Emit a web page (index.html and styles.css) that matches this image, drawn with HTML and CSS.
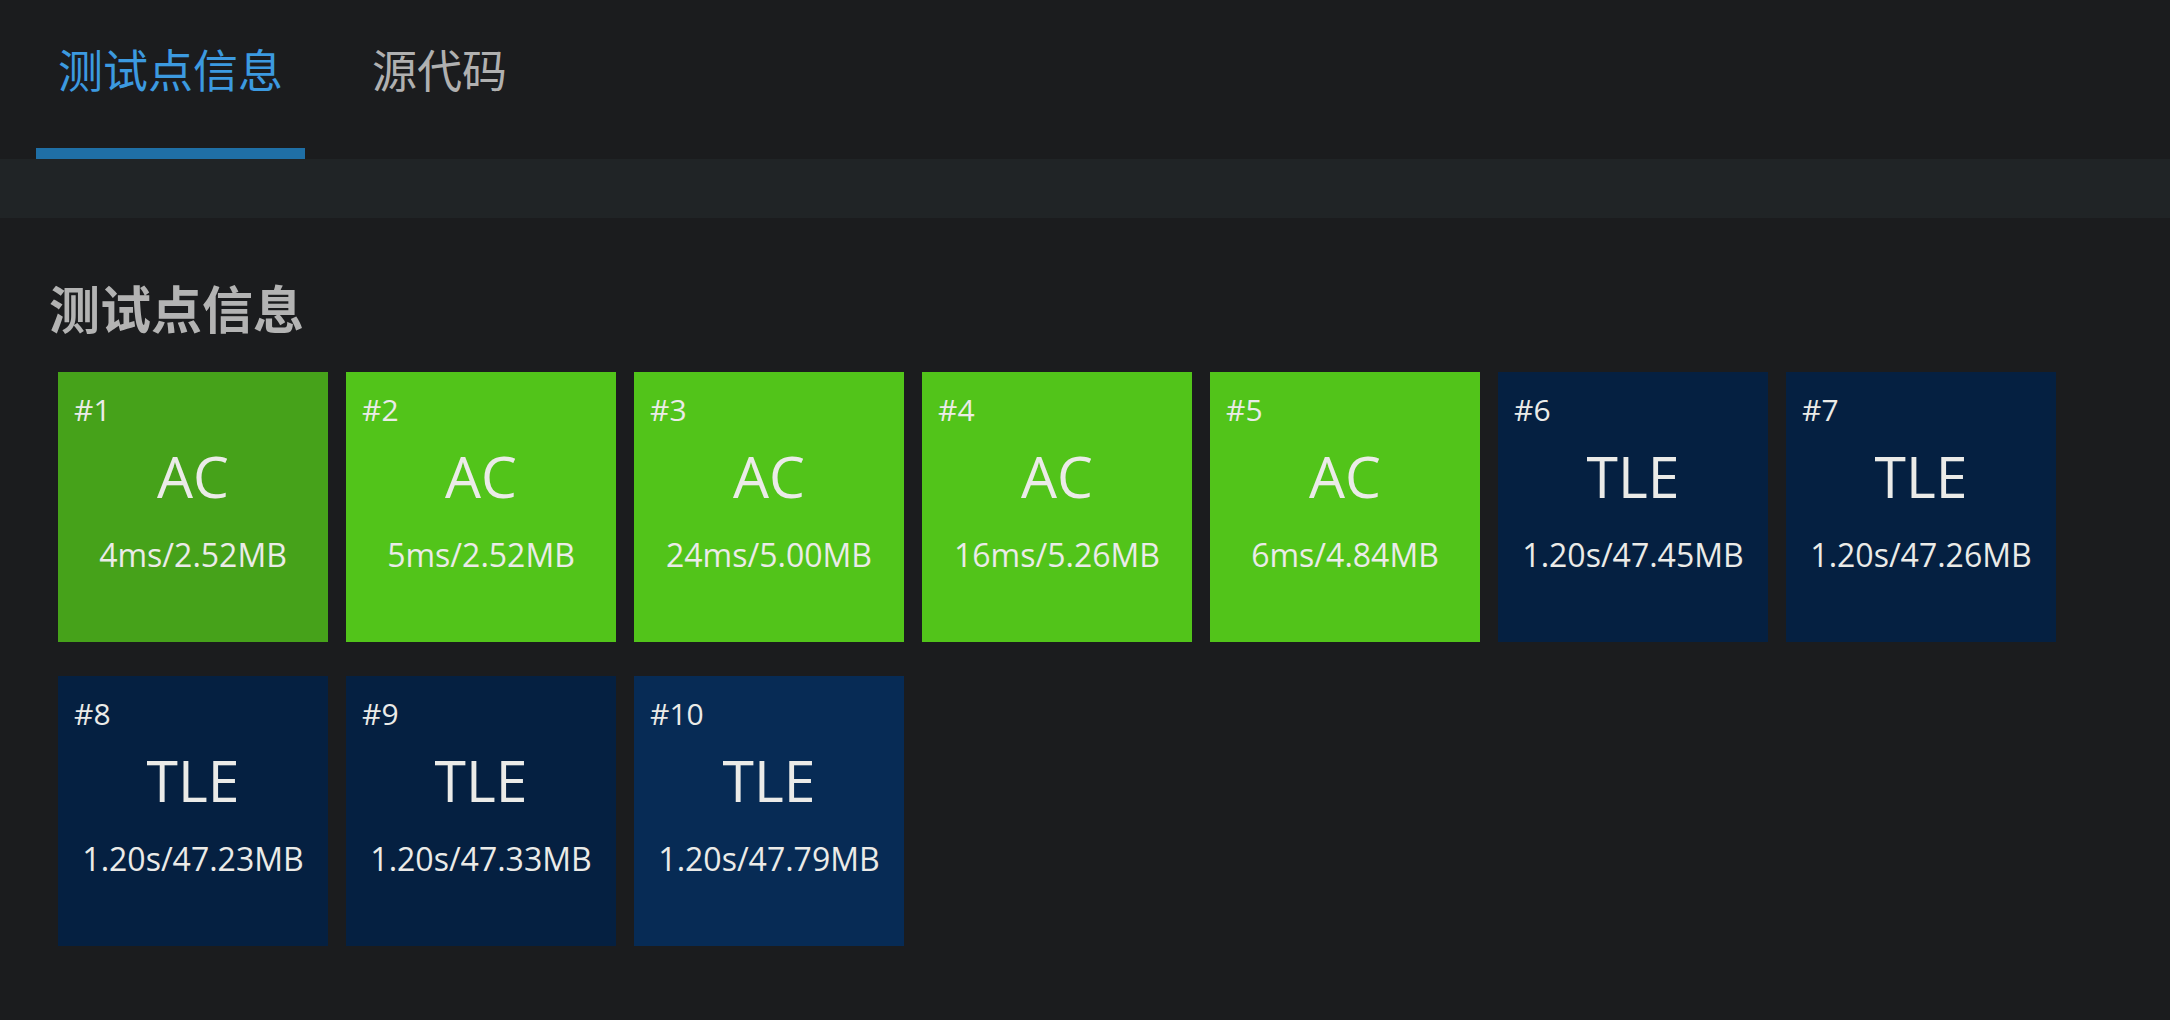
FILE: index.html
```html
<!DOCTYPE html>
<html lang="zh-CN">
<head>
<meta charset="utf-8">
<title>测试点信息</title>
<link rel="stylesheet" href="styles.css">
</head>
<body>
  <nav class="tabs">
    <div class="tab active">测试点信息</div>
    <div class="tab">源代码</div>
  </nav>
  <div class="band"></div>
  <main class="content">
    <h2 class="title">测试点信息</h2>
    <div class="grid">
      <div class="case ac hover"><div class="num">#1</div><div class="status">AC</div><div class="meta">4ms/2.52MB</div></div>
      <div class="case ac"><div class="num">#2</div><div class="status">AC</div><div class="meta">5ms/2.52MB</div></div>
      <div class="case ac"><div class="num">#3</div><div class="status">AC</div><div class="meta">24ms/5.00MB</div></div>
      <div class="case ac"><div class="num">#4</div><div class="status">AC</div><div class="meta">16ms/5.26MB</div></div>
      <div class="case ac"><div class="num">#5</div><div class="status">AC</div><div class="meta">6ms/4.84MB</div></div>
      <div class="case tle"><div class="num">#6</div><div class="status">TLE</div><div class="meta">1.20s/47.45MB</div></div>
      <div class="case tle"><div class="num">#7</div><div class="status">TLE</div><div class="meta">1.20s/47.26MB</div></div>
      <div class="case tle"><div class="num">#8</div><div class="status">TLE</div><div class="meta">1.20s/47.23MB</div></div>
      <div class="case tle"><div class="num">#9</div><div class="status">TLE</div><div class="meta">1.20s/47.33MB</div></div>
      <div class="case tle focus"><div class="num">#10</div><div class="status">TLE</div><div class="meta">1.20s/47.79MB</div></div>
    </div>
  </main>
</body>
</html>
```

FILE: styles.css
```css
html, body {
  margin: 0;
  padding: 0;
  background: #1b1c1e;
}
body {
  width: 2170px;
  height: 1020px;
  overflow: hidden;
  font-family: "Open Sans", "Noto Sans CJK SC", sans-serif;
}
.tabs {
  display: flex;
  height: 159px;
  padding-left: 36px;
  box-sizing: border-box;
}
.tab {
  height: 159px;
  box-sizing: border-box;
  padding: 46px 22px 0;
  margin-right: 45px;
  font-family: "Noto Sans CJK SC", sans-serif;
  font-size: 45px;
  line-height: 45px;
  color: #b0b0b0;
  border-bottom: 11px solid transparent;
}
.tab.active {
  color: #3c9ae0;
  border-bottom-color: #1f6fa6;
}
.band {
  height: 59px;
  background: #202426;
}
.content {
  padding: 64px 0 0 49px;
}
.title {
  margin: 0 0 39px;
  font-family: "Noto Sans CJK SC", sans-serif;
  font-weight: 700;
  font-size: 51px;
  line-height: 51px;
  color: #b3b3b3;
}
.grid {
  display: grid;
  grid-template-columns: repeat(7, 270px);
  column-gap: 18px;
  row-gap: 34px;
  margin-left: 9px;
}
.case {
  height: 270px;
  box-sizing: border-box;
  padding: 23px 16px 0;
  color: #ebebe8;
  display: flex;
  flex-direction: column;
}
.case.ac { background: #52c41a; }
.case.ac.hover { background: #46a21a; }
.case.tle { background: #052041; }
.case.tle.focus { background: #072b55; }
.num {
  font-size: 30px;
  line-height: 30px;
}
.status {
  margin-top: 23px;
  text-align: center;
  font-size: 57px;
  line-height: 57px;
}
.meta {
  margin-top: 34px;
  text-align: center;
  font-size: 32px;
  line-height: 32px;
  white-space: nowrap;
}
```
